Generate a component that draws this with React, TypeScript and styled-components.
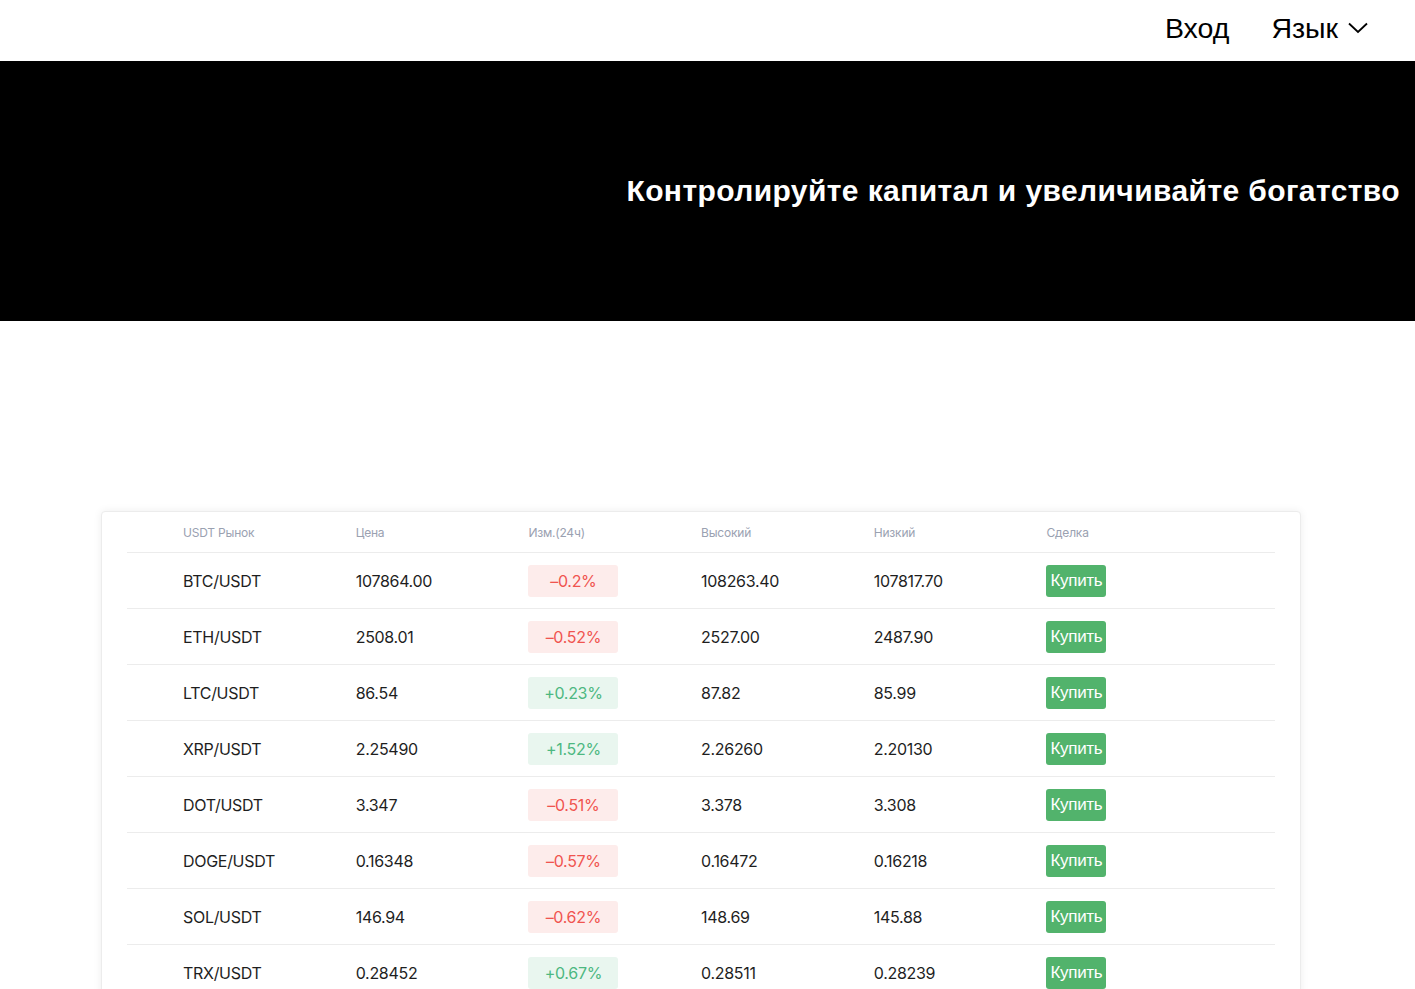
import React from "react";
import styled, { createGlobalStyle } from "styled-components";

const Global = createGlobalStyle`
  html, body { margin: 0; padding: 0; background: #fff; }
  body { font-family: "Liberation Sans", Arial, sans-serif; color: #000; }
  * { box-sizing: border-box; }
`;

const Header = styled.header`
  height: 61px;
  display: flex;
  align-items: center;
  justify-content: flex-end;
  padding: 0 47px 5px 0;
  gap: 42px;
`;

const NavItem = styled.a`
  font-size: 28.5px;
  color: #000;
  text-decoration: none;
  display: flex;
  align-items: center;
  gap: 10px;
  line-height: 1;
`;

const Banner = styled.section`
  height: 260px;
  background: #000;
  display: flex;
  align-items: center;
  justify-content: flex-end;
  padding-right: 15px;
`;

const Title = styled.h1`
  margin: 0;
  color: #fff;
  font-size: 30px;
  font-weight: 700;
  letter-spacing: 0.4px;
`;

const Main = styled.main`
  padding: 190px 114px 0 101px;
`;

const Card = styled.div`
  border: 1px solid #ececec;
  border-radius: 4px;
  box-shadow: 0 0 8px rgba(0, 0, 0, 0.07);
  padding: 0 25px;
  background: #fff;
`;

const Row = styled.div<{ $head?: boolean }>`
  display: grid;
  grid-template-columns: repeat(6, 172.7px);
  padding-left: 56px;
  align-items: center;
  height: ${(p) => (p.$head ? "41px" : "56px")};
  border-bottom: 1px solid #ececec;
  font-family: Inter, "Liberation Sans", sans-serif;
  font-size: ${(p) => (p.$head ? "12px" : "16px")};
  color: ${(p) => (p.$head ? "#9aa1b1" : "#1e1e1e")};
  letter-spacing: ${(p) => (p.$head ? "-0.2px" : "-0.3px")};
`;

const Badge = styled.span<{ $up: boolean }>`
  width: 90px;
  height: 32px;
  border-radius: 3px;
  display: flex;
  align-items: center;
  justify-content: center;
  background: ${(p) => (p.$up ? "#e9f6ef" : "#fdeceb")};
  color: ${(p) => (p.$up ? "#4db881" : "#f0544f")};
  font-size: 16px;
`;

const BuyButton = styled.button`
  width: 60px;
  height: 32px;
  border: none;
  border-radius: 3px;
  background: #52b36c;
  color: #fff;
  font-family: "Liberation Sans", Arial, sans-serif;
  font-size: 17px;
  padding: 0;
  letter-spacing: -0.3px;
`;

const rows = [
  ["BTC/USDT", "107864.00", "-0.2%", "108263.40", "107817.70"],
  ["ETH/USDT", "2508.01", "-0.52%", "2527.00", "2487.90"],
  ["LTC/USDT", "86.54", "+0.23%", "87.82", "85.99"],
  ["XRP/USDT", "2.25490", "+1.52%", "2.26260", "2.20130"],
  ["DOT/USDT", "3.347", "-0.51%", "3.378", "3.308"],
  ["DOGE/USDT", "0.16348", "-0.57%", "0.16472", "0.16218"],
  ["SOL/USDT", "146.94", "-0.62%", "148.69", "145.88"],
  ["TRX/USDT", "0.28452", "+0.67%", "0.28511", "0.28239"],
];

export default function App() {
  return (
    <>
      <Global />
      <Header>
        <NavItem>Вход</NavItem>
        <NavItem>
          Язык
          <svg width="20" height="12" viewBox="0 0 20 12" fill="none">
            <path d="M1 1.5 L10 10 L19 1.5" stroke="#000" strokeWidth="1.8" />
          </svg>
        </NavItem>
      </Header>
      <Banner>
        <Title>Контролируйте капитал и увеличивайте богатство</Title>
      </Banner>
      <Main>
        <Card>
          <Row $head>
            <span>USDT Рынок</span>
            <span>Цена</span>
            <span>Изм.(24ч)</span>
            <span>Высокий</span>
            <span>Низкий</span>
            <span>Сделка</span>
          </Row>
          {rows.map((r) => {
            const up = r[2].startsWith("+");
            return (
              <Row key={r[0]}>
                <span>{r[0]}</span>
                <span>{r[1]}</span>
                <span>
                  <Badge $up={up}>{up ? r[2] : "–" + r[2].slice(1)}</Badge>
                </span>
                <span>{r[3]}</span>
                <span>{r[4]}</span>
                <span>
                  <BuyButton>Купить</BuyButton>
                </span>
              </Row>
            );
          })}
        </Card>
      </Main>
    </>
  );
}
